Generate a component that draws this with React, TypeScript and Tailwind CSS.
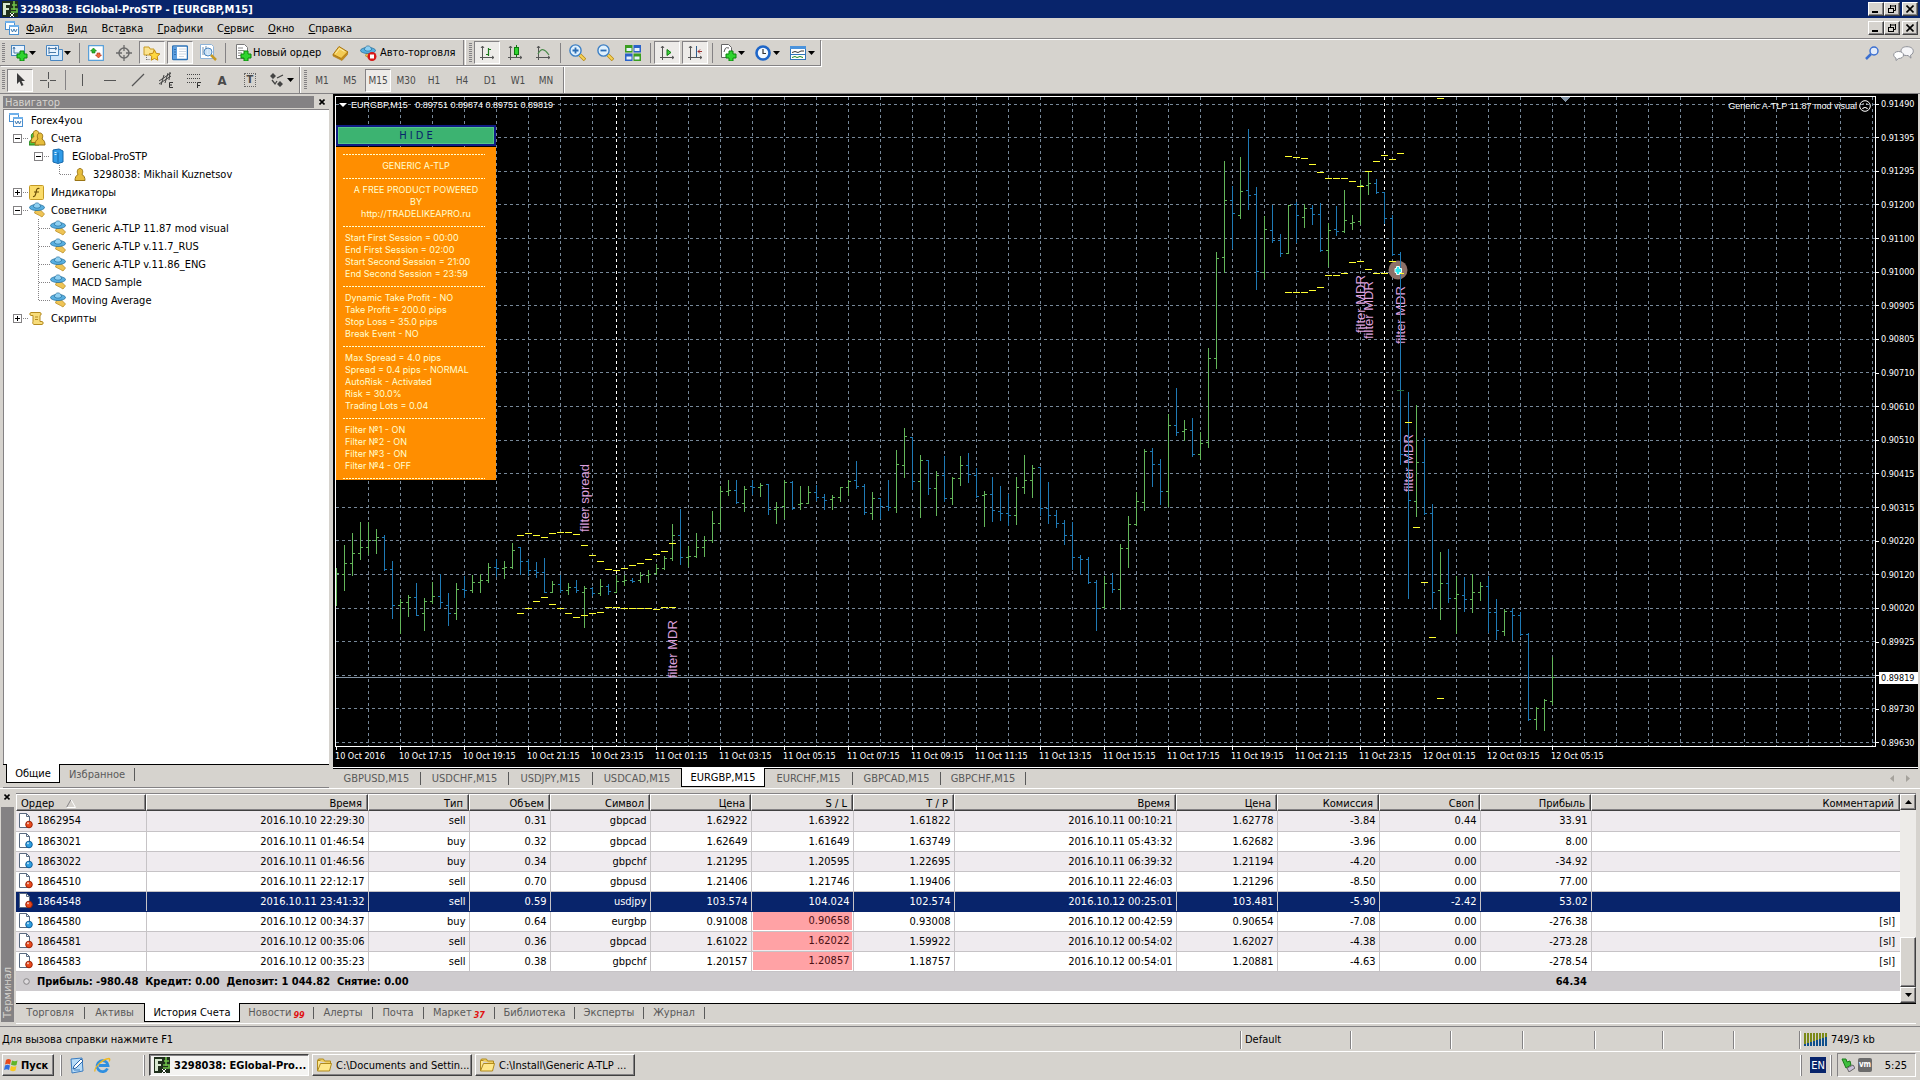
import type { ReactNode } from "react";

/* ---------- chart data: [high, low, open, close] as chart ordinates ---------- */
const BARS: number[][] = [
  [568, 605, 574, 573], [545, 590, 574, 563], [533, 575, 563, 553], [522, 559, 553, 547], [522, 554, 547, 540],
  [529, 553, 540, 537], [535, 570, 537, 569], [561, 618, 569, 605], [599, 633, 605, 602], [595, 616, 602, 597],
  [583, 615, 597, 615], [598, 630, 613, 601], [582, 603, 601, 596], [574, 607, 596, 602], [593, 625, 605, 613],
  [583, 619, 613, 589], [576, 597, 589, 590], [575, 592, 590, 582], [574, 592, 582, 580], [563, 582, 580, 567],
  [559, 576, 567, 568], [561, 578, 568, 567], [543, 568, 567, 550], [547, 574, 547, 561], [559, 575, 561, 570],
  [562, 577, 570, 572], [558, 592, 572, 592], [581, 592, 592, 584], [575, 592, 584, 590], [583, 594, 590, 587],
  [580, 592, 587, 590], [586, 627, 592, 588], [587, 595, 588, 593], [579, 595, 593, 586], [584, 594, 586, 591],
  [575, 592, 592, 581], [575, 585, 581, 580], [578, 582, 580, 581], [572, 582, 580, 575], [570, 582, 575, 574],
  [564, 574, 573, 568], [556, 569, 568, 558], [524, 560, 558, 535], [509, 564, 535, 557], [546, 566, 557, 556],
  [533, 557, 556, 547], [536, 556, 547, 540], [511, 542, 540, 523], [486, 529, 523, 491], [480, 495, 491, 490],
  [480, 503, 490, 502], [486, 511, 503, 489], [480, 494, 486, 487], [483, 496, 487, 485], [484, 514, 484, 509],
  [502, 523, 509, 507], [480, 518, 506, 482], [481, 509, 482, 508], [486, 509, 504, 503], [486, 503, 503, 492],
  [485, 500, 492, 497], [494, 509, 497, 500], [495, 509, 499, 497], [487, 501, 497, 487], [480, 495, 487, 481],
  [461, 488, 480, 486], [484, 514, 486, 512], [492, 519, 513, 498], [498, 518, 498, 506], [480, 510, 506, 507],
  [450, 512, 507, 464], [428, 477, 465, 436], [437, 489, 437, 481], [455, 517, 481, 460], [460, 494, 460, 488],
  [471, 515, 488, 475], [456, 501, 475, 498], [477, 504, 498, 478], [456, 485, 478, 465], [453, 482, 465, 474],
  [468, 497, 475, 496], [491, 526, 495, 494], [477, 521, 494, 510], [486, 520, 511, 513], [494, 525, 513, 515],
  [477, 524, 515, 487], [455, 493, 487, 480], [465, 497, 480, 468], [467, 515, 467, 508], [482, 523, 508, 515],
  [510, 527, 515, 523], [520, 544, 523, 535], [522, 569, 535, 557], [555, 574, 557, 559], [557, 583, 559, 582],
  [580, 630, 582, 608], [576, 608, 607, 583], [573, 592, 583, 589], [544, 609, 589, 548], [516, 567, 548, 524],
  [492, 525, 524, 501], [449, 510, 502, 451], [448, 486, 451, 464], [459, 504, 464, 491], [414, 506, 491, 425],
  [388, 435, 425, 432], [420, 440, 431, 429], [418, 456, 430, 454], [432, 459, 454, 443], [348, 447, 442, 358],
  [252, 368, 358, 258], [161, 272, 257, 200], [186, 248, 200, 213], [157, 218, 215, 191], [129, 209, 190, 195],
  [187, 289, 194, 271], [216, 278, 272, 229], [205, 242, 230, 240], [234, 256, 240, 253], [205, 253, 253, 205],
  [202, 242, 204, 215], [204, 227, 217, 208], [205, 224, 208, 214], [203, 251, 214, 250], [223, 266, 250, 230],
  [206, 235, 229, 231], [190, 232, 231, 220], [215, 229, 223, 222], [180, 224, 221, 185], [171, 194, 185, 183],
  [179, 193, 183, 192], [192, 223, 192, 218], [215, 255, 218, 254], [252, 464, 254, 454], [392, 598, 454, 500],
  [405, 516, 501, 462], [438, 514, 462, 513], [504, 608, 513, 592], [552, 619, 590, 583], [549, 602, 583, 598],
  [576, 633, 598, 594], [577, 611, 595, 599], [574, 612, 599, 592], [582, 600, 592, 586], [576, 632, 586, 612],
  [599, 639, 612, 630], [609, 635, 631, 611], [608, 640, 611, 615], [612, 635, 615, 634], [633, 720, 634, 719],
  [707, 729, 719, 708], [699, 730, 708, 700], [657, 704, 701, 677],
];

/* channel marks: [bar index, ordinate] */
const MARKS: number[][] = [
  [23, 535], [24, 533], [25, 535], [26, 537], [27, 533], [28, 532], [29, 532], [30, 534], [31, 545], [32, 555],
  [33, 561], [34, 569], [35, 570], [36, 568], [37, 565], [38, 563], [39, 559], [40, 554], [41, 551], [42, 543],
  [23, 613], [24, 608], [25, 601], [26, 597], [27, 604], [28, 608], [29, 613], [30, 617], [31, 615], [32, 613],
  [33, 612], [34, 607], [35, 607], [36, 608], [37, 608], [38, 608], [39, 608], [40, 609], [41, 607], [42, 607],
  [119, 156], [120, 157], [121, 158], [122, 164], [123, 172], [124, 178], [125, 178], [126, 178], [127, 181],
  [128, 186], [129, 171], [130, 161], [131, 155], [132, 159], [133, 153], [138, 98],
  [119, 292], [120, 292], [121, 292], [122, 290], [123, 287], [124, 275], [125, 275], [126, 273], [127, 262],
  [128, 261], [129, 269], [130, 273], [131, 273], [132, 261], [133, 273], [134, 422],
  [135, 527], [136, 582], [137, 637], [138, 698],
];

const bx = (i: number) => 336 + i * 8;
const barPath = (up: boolean) =>
  BARS.map(([h, l, o, c], i) =>
    c < o === up
      ? `M${bx(i) + 0.5} ${h}V${l + 1}M${bx(i) - 2} ${o + 0.5}h3M${bx(i)} ${c + 0.5}h3`
      : ""
  ).join("");

const GRID_Y = [104, 137, 171, 204, 238, 272, 305, 339, 372, 406, 440, 473, 507, 540, 574, 608, 641, 675, 708, 742];
const PRICES = [
  "0.91490", "0.91395", "0.91295", "0.91200", "0.91100", "0.91000", "0.90905", "0.90805", "0.90710", "0.90610",
  "0.90510", "0.90415", "0.90315", "0.90220", "0.90120", "0.90020", "0.89925", "", "0.89730", "0.89630",
];
const TIMES = [
  "10 Oct 2016", "10 Oct 17:15", "10 Oct 19:15", "10 Oct 21:15", "10 Oct 23:15", "11 Oct 01:15", "11 Oct 03:15",
  "11 Oct 05:15", "11 Oct 07:15", "11 Oct 09:15", "11 Oct 11:15", "11 Oct 13:15", "11 Oct 15:15", "11 Oct 17:15",
  "11 Oct 19:15", "11 Oct 21:15", "11 Oct 23:15", "12 Oct 01:15", "12 Oct 03:15", "12 Oct 05:15",
];

const LABELS: [string, number, number][] = [
  ["filter spread", 589, 532],
  ["filter MDR", 677, 678],
  ["filter MDR", 1365, 333],
  ["filter MDR", 1373, 339],
  ["filter MDR", 1405, 344],
  ["filter MDR", 1413, 492],
];

/* ---------- small building blocks ---------- */
const RAISED = "border border-t-white border-l-white border-r-[#404040] border-b-[#404040] shadow-[inset_-1px_-1px_0_#848284] bg-[#d6d3ce]";
const PRESSED = "border border-t-[#848284] border-l-[#848284] border-r-white border-b-white bg-[#edebe8]";

function Svg({ children, w = 16, h = 16 }: { children: ReactNode; w?: number; h?: number }) {
  return (
    <svg width={w} height={h} viewBox={`0 0 ${w} ${h}`} fill="none" className="shrink-0" aria-hidden="true">
      {children}
    </svg>
  );
}

const Caret = () => <Svg w={7} h={4}><path d="M0 0h7L3.500 4z" fill="#000" /></Svg>;
const Plus = () => <path d="M9 7h4v3h3v4h-3v3H9v-3H6v-4h3z" fill="#2fd42f" stroke="#0a860a" />;

const NewChartIcon = () => (
  <Svg w={17} h={17}>
    <rect x="0.500" y="1.500" width="13" height="10" fill="#eaf4ff" stroke="#4a86c0" />
    <path d="M3 3v6h8M2 5l1-2 1 2M9 8l2 1-2 1" stroke="#4a7aa8" />
    <Plus />
  </Svg>
);
const ProfilesIcon = () => (
  <Svg w={17} h={16}>
    <path d="M4.500 4.500h12v11h-12z" fill="#cfe4f8" stroke="#4a86c0" />
    <path d="M0.500 0.500h12v10h-12z" fill="#eaf4ff" stroke="#4a86c0" />
    <path d="M2 3.500h9M9 2l2 1.500L9 5M3 2v7M3 7.500h7" stroke="#4a7aa8" />
  </Svg>
);
const MarketWatchIcon = () => (
  <Svg>
    <rect x="0.500" y="0.500" width="15" height="15" rx="1" fill="#fff" stroke="#5aa0d8" strokeWidth="1.500" />
    <path d="M5.500 3l3 3-1.500 0v2H4V6H2.500z" fill="#2db52d" stroke="#0d7a0d" strokeWidth="0.600" />
    <path d="M10.500 13l3-3H12V8H9v2H7.500z" fill="#f06a3c" stroke="#b02a10" strokeWidth="0.600" />
  </Svg>
);
const TargetIcon = () => (
  <Svg>
    <circle cx="8" cy="8" r="5" stroke="#6b6b6b" strokeWidth="1.500" />
    <path d="M8 0v6M8 10v6M0 8h6M10 8h6" stroke="#6b6b6b" strokeWidth="1.300" />
  </Svg>
);
const STAR = "M11 5l1.700 3.400 3.700.5-2.700 2.600.6 3.700L11 13.500l-3.300 1.700.6-3.700L5.600 8.900l3.700-.5z";
const NavigatorIcon = () => (
  <Svg w={18} h={16}>
    <path d="M1 2h5l1 2h4v6H1z" fill="#fbe38e" stroke="#c79a25" />
    <path d="M3.500 10v5M3.500 14.500h4" stroke="#777" strokeDasharray="1 1" />
    <path d={STAR} fill="#ffd840" stroke="#c28a10" transform="translate(0.500 0)" />
  </Svg>
);
const DataIcon = () => (
  <Svg>
    <rect x="0.500" y="1" width="15" height="13.500" rx="1" fill="#fff" stroke="#2f74b8" strokeWidth="1.500" />
    <path d="M1 2h4v12H1z" fill="#5d9fe0" />
    <path d="M7 4h7M7 6.500h7M7 9h7M7 11.500h5" stroke="#cfd8e2" />
    <path d="M3 4v1M3 6.500v1M3 9v1" stroke="#0b3c78" />
  </Svg>
);
const TesterIcon = () => (
  <Svg w={17} h={17}>
    <path d="M0.500 0.500h11l2 2v12h-13z" fill="#fff" stroke="#8fb4d8" />
    <path d="M3 3v8M6 2v9M9 4v6" stroke="#6f8fae" />
    <circle cx="8" cy="8" r="4" fill="#cfe6fa" fillOpacity="0.800" stroke="#4a86c0" />
    <path d="M11 11l5 5" stroke="#c79a25" strokeWidth="2.500" />
  </Svg>
);
const OrderIcon = () => (
  <Svg w={17} h={17}>
    <path d="M1.500 0.500h8l3 3v11h-11z" fill="#fff" stroke="#7a7a7a" />
    <path d="M3 4h5M3 6.500h6M3 9h4M3 11.500h3" stroke="#8a8a8a" />
    <Plus />
  </Svg>
);
const BookIcon = () => (
  <Svg w={17} h={16}>
    <path d="M1 9.500L7 1.500l9 5.500-6 7z" fill="#f3cb55" stroke="#a87410" />
    <path d="M1 9.500l8 4L15.500 7v2.500L10 15.500 1 11z" fill="#c68d1b" stroke="#a87410" strokeWidth="0.600" />
    <path d="M3.500 8.500L7.500 3.500l5 3" stroke="#fff0b0" />
  </Svg>
);
function ExpertIcon({ stop = false }: { stop?: boolean }) {
  return (
    <Svg w={17} h={16}>
      <path d="M6.500 8l5 0 4 4-2.500 3-2.500-1.500L5.500 11z" fill="#efc456" stroke="#b58618" strokeWidth="0.700" />
      <ellipse cx="8" cy="5.500" rx="7.500" ry="3" fill="#57aee0" stroke="#25719f" strokeWidth="0.800" />
      <path d="M4.500 5c0-5.500 7-5.500 7 0-2 1.500-5 1.500-7 0z" fill="#8fd0f2" stroke="#25719f" strokeWidth="0.700" />
      {stop && <><circle cx="12" cy="11.500" r="4.500" fill="#d81818" /><rect x="10" y="9.500" width="4" height="4" fill="#fff" /></>}
    </Svg>
  );
}
const Axes = ({ children, c = "#555" }: { children: ReactNode; c?: string }) => (
  <Svg><path d="M3.500 1v14M1 12.500h14M2 3l1.500-2L5 3M13 11l2 1.500L13 14" stroke={c} />{children}</Svg>
);
const BarsIcon = () => <Axes><path d="M9.500 3v8M7 9.500h2.500M9.500 4.500H12" stroke="#1c7a1c" strokeWidth="1.200" /></Axes>;
const CandleIcon = () => <Axes><path d="M9.500 0v12" stroke="#0d7a0d" /><rect x="7.500" y="2.500" width="4" height="7" fill="#2ed32e" stroke="#0d7a0d" /></Axes>;
const LineIcon = () => <Axes><path d="M3 9c3-6 6-6 11 1" stroke="#4a8a4a" strokeWidth="1.200" /></Axes>;
function ZoomIcon({ plus = false }: { plus?: boolean }) {
  return (
    <Svg w={17} h={17}>
      <path d="M10.500 10.500l5.500 5.500" stroke="#b98a14" strokeWidth="3.500" />
      <path d="M10.500 10.500l5 5" stroke="#f6d257" strokeWidth="2" />
      <circle cx="6.500" cy="6.500" r="5.600" fill="#dff0fd" stroke="#3c7fc4" strokeWidth="1.400" />
      <path d={plus ? "M3.500 6.500h6M6.500 3.500v6" : "M3.500 6.500h6"} stroke="#2a6cb4" strokeWidth="1.800" />
    </Svg>
  );
}
const TilesIcon = () => (
  <Svg>
    <path d="M0 0h7.500v7.500H0zM8.500 8.500H16V16H8.500z" fill="#3a9d20" /><path d="M8.500 0H16v7.500H8.500zM0 8.500h7.500V16H0z" fill="#2a62c8" />
    <path d="M1.500 3h5v3h-5zM9.500 3h5v3h-5zM1.500 11.500h5v3h-5zM9.500 11.500h5v3h-5z" fill="#e8f2fb" />
  </Svg>
);
const ScrollIcon = () => <Axes><path d="M8 4.500v6l4-3z" fill="#3fd43f" stroke="#117a11" /></Axes>;
const ShiftIcon = () => <Axes><path d="M9.500 1v11" stroke="#2f5f8f" /><path d="M15 6.500h-4M13 4.500l-2 2 2 2" stroke="#a03030" /></Axes>;
const IndicatorsIcon = () => (
  <Svg w={17} h={17}><path d="M1.500 0.500h7l3 3v10h-10z" fill="#fff" stroke="#666" /><path d="M4 8c2-6 2-4 5-4" stroke="#555" /><Plus /></Svg>
);
const ClockIcon = () => (
  <Svg><circle cx="8" cy="8" r="6.500" fill="#f4f9ff" stroke="#1f66c8" strokeWidth="2.600" /><path d="M8 4v4.500h3" stroke="#333" strokeWidth="1.200" /></Svg>
);
const TemplateIcon = () => (
  <Svg>
    <rect x="0.500" y="1.500" width="15" height="13" fill="#fff" stroke="#2f74b8" /><path d="M0 1h16v3H0z" fill="#4b93dc" />
    <path d="M2 7.500l3-1 3 1 3-1.500h3" stroke="#333" /><path d="M1 9.500h14" stroke="#2f74b8" /><path d="M2 12.500l3-1 2 1 3-1 3 1" stroke="#1d8a1d" />
  </Svg>
);
const ChartsIcon = () => (
  <Svg w={14} h={14}>
    <rect x="0.500" y="0.500" width="9" height="8" fill="#fff" stroke="#4a8fd0" /><path d="M0 0h10v2H0z" fill="#6fb0ea" />
    <rect x="4.500" y="4.500" width="9" height="9" fill="#fff" stroke="#4a8fd0" /><path d="M4 4h10v2H4z" fill="#6fb0ea" />
    <path d="M6 8l1.500 3L9 8l1.500 3L12 8" stroke="#3b78b0" />
  </Svg>
);
const AppIcon = () => (
  <Svg>
    <rect width="16" height="16" fill="#20301c" /><path d="M1 2h7v2H4v3h3v2H4v5H1z" fill="#d8e8d0" />
    <path d="M12 0v9M10 4h5M9 8h6v3H9" stroke="#6fc04a" strokeWidth="1.600" /><path d="M8 12l4 4M12 12l-4 4" stroke="#fff" />
  </Svg>
);
const PERSON = "M2 13.500c0-3 1-5 3-6C3.500 4.500 4.500 1.500 7 1.500s3.500 3 2 6c2 1 3 3 3 6z";
const PersonIcon = () => <Svg w={14} h={15}><path d={PERSON} fill="#e6bd3c" stroke="#9a7414" /></Svg>;
const AccountsIcon = () => (
  <Svg w={17} h={16}>
    <path d={PERSON} fill="#4fc23c" stroke="#21801a" transform="translate(-2 1.500)" />
    <path d={PERSON} fill="#f0ca50" stroke="#9a7414" transform="translate(0 -1)" />
    <path d={PERSON} fill="#e6bd3c" stroke="#9a7414" transform="translate(4 1.500)" />
  </Svg>
);
const ServerIcon = () => (
  <Svg w={12} h={16}><path d="M1 2l6-1 4 2v11l-5 1.500L1 14z" fill="#2f9be8" stroke="#1466a8" /><path d="M6 4.500v10" stroke="#1466a8" /><path d="M2.500 4.500h2M2.500 6.500h2" stroke="#d8f0ff" /></Svg>
);
const FunctionIcon = () => (
  <Svg w={15} h={15}><rect x="0.500" y="0.500" width="14" height="14" rx="1" fill="#fbdc6a" stroke="#c49a25" /><path d="M10.500 3.500c-3-1-3 2-3.500 4s-.5 4.500-3 4M5 7h5" stroke="#6b4e08" strokeWidth="1.200" /></Svg>
);
const ScriptIcon = () => (
  <Svg w={15} h={15}><path d="M2 1.500h9c1.500 0 1.500 3 0 3v6h2c1.500 0 1.500 3 0 3H5c-1.500 0-1.500-3-1-3v-6H2c-1.500 0-1.500-3 0-3z" fill="#f7dc7a" stroke="#b58b20" /><path d="M6 6h3M6 8.500h3" stroke="#b58b20" /></Svg>
);
function DealIcon({ sell }: { sell: boolean }) {
  return (
    <Svg w={14} h={16}>
      <path d="M0.500 0.500h7l3 3v11h-10z" fill="#fff" stroke="#5a6a80" /><path d="M7.500 0.500v3h3" stroke="#5a6a80" />
      <circle cx="10" cy="11.500" r="3.300" fill={sell ? "#e8491d" : "#2f9ee0"} stroke={sell ? "#9c2408" : "#10609c"} />
      <circle cx="9" cy="10.300" r="1" fill="#fff" fillOpacity="0.700" />
    </Svg>
  );
}
const FolderIcon = () => (
  <Svg w={15} h={14}><path d="M0.500 2.500l1-1.500h5l1 2h6v3" fill="#f0cf60" stroke="#b08a1c" /><path d="M0.500 12.500v-10h3M3.500 5.500h11l-2 7.500h-12z" fill="#ffe88a" stroke="#b08a1c" /></Svg>
);

function Grip() {
  return <div className="mx-[2px] h-5 w-[3px] shrink-0 bg-[repeating-linear-gradient(to_bottom,#848284_0_1px,#d6d3ce_1px_2px)]" />;
}
function Sep() {
  return <div className="flex h-5 w-1 shrink-0 justify-center"><div className="w-px bg-[#848284]" /></div>;
}
function Tool({ label, children, on = false, menu = false }: { label: string; children: ReactNode; on?: boolean; menu?: boolean }) {
  const base = "flex h-[23px] shrink-0 items-center ";
  return (
    <button type="button" aria-label={label} className={base + (menu ? "w-[33px] justify-between pl-1 pr-1" : "w-[26px] justify-center") + (on ? " " + PRESSED : "")}>
      {children}
      {menu && <Caret />}
    </button>
  );
}

function WindowButtons() {
  const b = "flex h-[14px] w-4 items-center justify-center " + RAISED;
  return (
    <div className="flex pr-[2px]">
      <button type="button" aria-label="Свернуть" className={b}><Svg w={8} h={8}><path d="M0 6h6v2H0z" fill="#000" /></Svg></button>
      <button type="button" aria-label="Восстановить" className={b}><Svg w={8} h={8}><path d="M2.500 0v4M7.500 0v5.500H5M2 1h6M0.500 3v5M5.500 3v5M0 3.500h6M0 7.500h6" stroke="#000" /></Svg></button>
      <button type="button" aria-label="Закрыть" className={b + " ml-[2px]"}><Svg w={8} h={8}><path d="M0.500 0.500l7 7M7.500 0.500l-7 7" stroke="#000" strokeWidth="1.600" /></Svg></button>
    </div>
  );
}

/* ---------- header ---------- */
const MENU: [string, string, string][] = [
  ["", "Ф", "айл"], ["", "В", "ид"], ["Вст", "а", "вка"], ["", "Г", "рафики"], ["С", "е", "рвис"], ["", "О", "кно"], ["", "С", "правка"],
];
const PERIODS = ["M1", "M5", "M15", "M30", "H1", "H4", "D1", "W1", "MN"];

function Header() {
  return (
    <header className="shrink-0">
      <div className="flex h-[18px] items-center bg-[#08246b] pl-[2px] text-white">
        <AppIcon />
        <h1 className="ml-[2px] flex-1 font-bold">3298038: EGlobal-ProSTP - [EURGBP,M15]</h1>
        <WindowButtons />
      </div>
      <div className="flex h-[21px] items-center border-b border-[#848284] pl-[5px]">
        <ChartsIcon />
        <nav className="ml-[7px] flex flex-1 gap-[14px]">
          {MENU.map(([a, u, z]) => (
            <button type="button" key={u + z}>{a}<span className="underline">{u}</span>{z}</button>
          ))}
        </nav>
        <WindowButtons />
      </div>
      <div className="flex items-start justify-between border-t border-white">
        <div className="flex h-[26px] items-center border-r border-b border-[#848284] pr-[1px] shadow-[1px_1px_0_#fff]">
          <div className="flex h-full items-center gap-[2px] border-r border-[#848284] pr-[3px]">
            <div className="-mr-[2px] flex"><Grip /></div>
            <Tool label="Новый график" menu><NewChartIcon /></Tool>
            <Tool label="Профили" menu><ProfilesIcon /></Tool>
            <Sep />
            <Tool label="Обзор рынка"><MarketWatchIcon /></Tool>
            <Tool label="Окно данных"><TargetIcon /></Tool>
            <Tool label="Навигатор" on><NavigatorIcon /></Tool>
            <Tool label="Терминал" on><DataIcon /></Tool>
            <Tool label="Тестер стратегий"><TesterIcon /></Tool>
            <Sep />
            <button type="button" className="flex w-24 shrink-0 items-center gap-[1px] pl-[6px]"><OrderIcon />Новый ордер</button>
            <Tool label="MetaEditor"><BookIcon /></Tool>
            <button type="button" className="flex shrink-0 items-center gap-[3px] px-[5px]"><ExpertIcon stop />Авто-торговля</button>
          </div>
          <div className="ml-[1px] flex h-full items-center gap-[2px] border-l border-white">
            <div className="-mr-[2px] flex pl-[1px]"><Grip /></div>
            <Tool label="Бары" on><BarsIcon /></Tool>
            <Tool label="Свечи"><CandleIcon /></Tool>
            <Tool label="Линия"><LineIcon /></Tool>
            <Sep />
            <Tool label="Увеличить"><ZoomIcon plus /></Tool>
            <Tool label="Уменьшить"><ZoomIcon /></Tool>
            <Tool label="Упорядочить окна"><TilesIcon /></Tool>
            <Sep />
            <Tool label="Автопрокрутка" on><ScrollIcon /></Tool>
            <Tool label="Сдвиг графика" on><ShiftIcon /></Tool>
            <Sep />
            <Tool label="Индикаторы" menu><IndicatorsIcon /></Tool>
            <Tool label="Периоды" menu><ClockIcon /></Tool>
            <Tool label="Шаблоны" menu><TemplateIcon /></Tool>
          </div>
        </div>
        <div className="flex h-[26px] items-center gap-[14px] pr-[6px]">
          <button type="button" aria-label="Поиск"><Svg w={14} h={14}><path d="M6 8l-5 5" stroke="#3b6fd0" strokeWidth="2.500" /><circle cx="9" cy="5" r="4" fill="#e4ecfa" stroke="#3b6fd0" strokeWidth="1.400" /></Svg></button>
          <button type="button" aria-label="Сообщения"><Svg w={21} h={15}><path d="M14 0.700c4 0 6.300 2 6.300 4.500S18 9 17.500 9.200l.5 3-3-2.700c-4.500.3-7-1.500-7-4.300s2-4.500 6-4.500z" fill="#f6f6f8" stroke="#8e9098" /><path d="M5.500 5.500c3 0 5 1.500 5 3.500s-2 3.500-5 3.500L3 14.500v-2.500C1.500 11.500.7 10.300.7 9c0-2 2-3.500 4.800-3.500z" fill="#fff" stroke="#8e9098" /></Svg></button>
        </div>
      </div>
      <div className="mt-px flex h-[26px] items-center">
        <div className="flex h-full items-center gap-[2px] border-r border-[#848284] pr-[1px] text-[#4a4a4a] shadow-[1px_0_0_#fff]">
          <div className="-mr-[2px] flex"><Grip /></div>
          <Tool label="Курсор" on><Svg w={14} h={16}><path d="M4 1v11l2.500-2.500L8.500 14l2-1-2-4H12z" fill="#3a3a3a" /></Svg></Tool>
          <Tool label="Перекрестие"><Svg><path d="M8.500 0v7M8.500 10v6M0 8.500h7M10 8.500h6" stroke="#555" /></Svg></Tool>
          <Sep />
          <Tool label="Вертикальная линия"><Svg><path d="M8.500 2v12" stroke="#555" /></Svg></Tool>
          <Tool label="Горизонтальная линия"><Svg><path d="M2 8.500h12" stroke="#555" /></Svg></Tool>
          <Tool label="Трендовая линия"><Svg><path d="M2 14L14 2" stroke="#555" strokeWidth="1.200" /></Svg></Tool>
          <Tool label="Канал"><Svg><path d="M1 9L13 1M1 12l12-8M3 13L6 3M7 11l3-10M11 8l1-8" stroke="#444" /><path d="M15 10.500h-3.500v5H15M11 13h3" stroke="#333" /></Svg></Tool>
          <Tool label="Фибоначчи"><Svg><path d="M1 2.500h14M1 6.500h14M1 10.500h9" stroke="#444" strokeDasharray="1 1" /><path d="M15 10.500h-3.500V16M11 13.500h3" stroke="#333" /></Svg></Tool>
          <Tool label="Текст"><span className="text-[13px] font-bold">A</span></Tool>
          <Tool label="Текстовая метка"><span className="border border-dotted border-[#666] px-[2px] text-[11px] leading-[12px] font-bold">T</span></Tool>
          <Tool label="Стрелки" menu><Svg><path d="M4 1l3 3-3 3-3-3zM11 9l3 3-3 3-3-3z" fill="#444" /><path d="M3 8l3 4 2-3M8 6l6-3" stroke="#444" strokeWidth="1.300" /></Svg></Tool>
        </div>
        <div className="ml-[2px] flex h-full items-center gap-[2px] border-r border-[#848284] pr-1 text-[#4a4a4a] shadow-[1px_0_0_#fff]">
          <div className="-mr-[2px] flex"><Grip /></div>
          {PERIODS.map((p) => (
            <button type="button" key={p} className={"h-[23px] w-[26px] shrink-0 text-[10px] " + (p === "M15" ? PRESSED : "")}>{p}</button>
          ))}
        </div>
      </div>
    </header>
  );
}

/* ---------- navigator ---------- */
function Expander({ open }: { open: boolean }) {
  return (
    <Svg w={16} h={18}>
      <rect x="0.500" y="5.500" width="8" height="8" fill="#fff" stroke="#848284" />
      <path d={open ? "M2 9.500h5" : "M2 9.500h5M4.500 7v5"} stroke="#000" />
      <path d="M10 9.500h6" stroke="#848284" strokeDasharray="1 1" />
    </Svg>
  );
}
function Branch({ last = false }: { last?: boolean }) {
  return <Svg w={12} h={18}><path d={last ? "M0.500 0v9.500M1 9.500h11" : "M0.500 0v18M1 9.500h11"} stroke="#848284" strokeDasharray="1 1" /></Svg>;
}
function TreeRow({ pad, lead, icon, text }: { pad: string; lead?: ReactNode; icon: ReactNode; text: string }) {
  return (
    <li className={"flex h-[18px] items-center " + pad}>
      {lead}
      <span className="flex w-[22px] items-center">{icon}</span>
      <span>{text}</span>
    </li>
  );
}
function Navigator() {
  const experts = ["Generic A-TLP 11.87 mod visual", "Generic A-TLP v.11.7_RUS", "Generic A-TLP v.11.86_ENG", "MACD Sample", "Moving Average"];
  return (
    <aside className="flex w-[333px] shrink-0 flex-col border-t border-[#848284] pt-[2px] pr-1 pl-[3px]">
      <div className="flex h-[12px] items-center">
        <h2 className="flex h-full flex-1 items-center bg-[#848284] pl-[2px] text-[#d6d3ce]">Навигатор</h2>
        <button type="button" aria-label="Закрыть навигатор" className="flex w-[15px] justify-center"><Svg w={6} h={6}><path d="M0.500 0.500l5 5M5.500 0.500l-5 5" stroke="#000" strokeWidth="1.600" /></Svg></button>
      </div>
      <ul className="mt-[1px] flex-1 border-t border-l border-[#848284] bg-white pt-[1px]">
        <TreeRow pad="pl-[5px]" icon={<ChartsIcon />} text="Forex4you" />
        <TreeRow pad="pl-[9px]" lead={<Expander open />} icon={<AccountsIcon />} text="Счета" />
        <TreeRow pad="pl-[30px]" lead={<Expander open />} icon={<span className="pl-[2px]"><ServerIcon /></span>} text="EGlobal-ProSTP" />
        <TreeRow pad="pl-[55px]" lead={<Branch last />} icon={<span className="pl-[2px]"><PersonIcon /></span>} text="3298038: Mikhail Kuznetsov" />
        <TreeRow pad="pl-[9px]" lead={<Expander open={false} />} icon={<FunctionIcon />} text="Индикаторы" />
        <TreeRow pad="pl-[9px]" lead={<Expander open />} icon={<ExpertIcon />} text="Советники" />
        {experts.map((e, i) => (
          <TreeRow key={e} pad="pl-[34px]" lead={<Branch last={i === 4} />} icon={<ExpertIcon />} text={e} />
        ))}
        <TreeRow pad="pl-[9px]" lead={<Expander open={false} />} icon={<ScriptIcon />} text="Скрипты" />
      </ul>
      <div className="flex h-6 border-t border-b border-black border-b-[#848284] pl-[3px] text-[#5a5a5a]">
        <button type="button" className="-mt-px h-[19px] w-[54px] border border-t-0 border-black bg-white text-black">Общие</button>
        <button type="button" className="my-[3px] h-[13px] w-[75px] border-r border-[#5a5a5a] leading-[12px]">Избранное</button>
      </div>
    </aside>
  );
}

/* ---------- chart ---------- */
const INFO: string[][] = [
  ["Start First Session = 00:00", "End First Session = 02:00", "Start Second Session = 21:00", "End Second Session = 23:59"],
  ["Dynamic Take Profit - NO", "Take Profit = 200.0 pips", "Stop Loss = 35.0 pips", "Break Event - NO"],
  ["Max Spread = 4.0 pips", "Spread = 0.4 pips - NORMAL", "AutoRisk - Activated", "Risk = 30.0%", "Trading Lots = 0.04"],
  ["Filter №1 - ON", "Filter №2 - ON", "Filter №3 - ON", "Filter №4 - OFF"],
];
const Rule = () => (
  <div className="flex h-3 items-center pr-1">
    <div className="h-px flex-1 bg-[repeating-linear-gradient(to_right,#ffffd0_0_2px,transparent_2px_3px)]" />
  </div>
);

function Plot() {
  return (
    <div className="relative flex-1 overflow-hidden border border-white">
      <svg viewBox="336 97 1539 649" preserveAspectRatio="none" className="absolute inset-0 h-full w-full" shapeRendering="crispEdges" fill="none">
        <g stroke="#778899" strokeDasharray="3 3">
          {GRID_Y.map((y) => <path key={y} d={`M336 ${y + 0.5}H1875`} />)}
          {Array.from({ length: 48 }, (_, k) => <path key={k} d={`M${368.5 + k * 32} 97V746`} />)}
        </g>
        <path d="M336 677.500H1875" stroke="#8494a5" />
        <path d="M616.500 97V746M1384.500 97V746" stroke="#fff" strokeDasharray="3 3" />
        <path d={barPath(true)} stroke="#63b65a" />
        <g shapeRendering="auto">
          {LABELS.map(([t, x, y]) => (
            <text key={x} transform={`translate(${x} ${y}) rotate(-90)`} fill="#dda0dd" fontSize="13" fontFamily="Liberation Sans, sans-serif">{t}</text>
          ))}
        </g>
        <circle cx="1398" cy="270" r="9.500" fill="#8c7068" shapeRendering="auto" />
        <path d={barPath(false)} stroke="#1f7ab5" />
        <path d="M1397 390.500h7" stroke="#2f6f3a" />
        <path d={MARKS.map(([i, y]) => `M${bx(i) - 3} ${y + 0.5}h7`).join("")} stroke="#ffff31" />
        <path d="M1396.500 266.500h3v2h2v4h-2v2h-3v-2h-1.500v-4h1.500z" fill="#29e7f0" stroke="#e8ffff" shapeRendering="auto" />
        <path d="M1560 97h10l-5 5z" fill="#8494a5" />
      </svg>
      <div className="absolute top-[2px] left-[3px] flex items-center text-[9px] leading-3 text-white">
        <Svg w={8} h={4}><path d="M0 0h8L4 4z" fill="#fff" /></Svg>
        <span className="ml-1 font-['Liberation_Sans',sans-serif]">EURGBP,M15&nbsp;&nbsp; 0.89751 0.89874 0.89751 0.89819</span>
      </div>
      <div className="absolute top-[3px] right-1 flex items-center gap-[2px] text-[9px] leading-3 text-white">
        <span className="font-['Liberation_Sans',sans-serif]">Generic A-TLP 11.87 mod visual</span>
        <Svg w={12} h={12}><circle cx="6" cy="6" r="5.300" stroke="#fff" /><path d="M3.500 4h1.500M7 4h1.500M3.500 9c1-2 4-2 5 0" stroke="#fff" strokeWidth="1.200" /></Svg>
      </div>
      <button type="button" className="absolute top-7 left-0 h-[21px] w-40 border-2 border-[#101c84] bg-[#3cb371] text-[11px] leading-4 text-[#08246b] shadow-[inset_0_0_0_1px_#55c68a]">H I D E</button>
      <div className="absolute top-[50px] left-0 w-40 bg-[#ff8e00] px-[7px] pt-px text-[9px] leading-3 text-[#ffffd0] font-['Inter',sans-serif]">
        <Rule />
        <p className="text-center">GENERIC A-TLP</p>
        <Rule />
        <p className="text-center whitespace-nowrap">A FREE PRODUCT POWERED<br />BY<br />http://TRADELIKEAPRO.ru</p>
        {INFO.map((g, i) => (
          <div key={i}>
            <Rule />
            {g.map((l) => <p key={l} className="pl-[2px] whitespace-pre">{l}</p>)}
          </div>
        ))}
        <div className="-mb-[4px]"><Rule /></div>
      </div>
    </div>
  );
}

const CHART_TABS: [string, string][] = [
  ["GBPUSD,M15", "w-[88px]"], ["USDCHF,M15", "w-[88px]"], ["USDJPY,M15", "w-[84px]"], ["USDCAD,M15", "w-[88px]"],
  ["EURGBP,M15", "w-[84px]"], ["EURCHF,M15", "w-[88px]"], ["GBPCAD,M15", "w-[88px]"], ["GBPCHF,M15", "w-[85px]"],
];

function ChartArea() {
  return (
    <section className="flex min-w-0 flex-1 flex-col border-t border-[#848284] pr-[2px]">
      <div className="flex flex-1 bg-black text-[9px] text-white">
        <div className="flex min-w-0 flex-1 flex-col pt-[2px] pl-[2px]">
          <Plot />
          <div className="flex h-5 overflow-hidden">
            {TIMES.map((t) => (
              <div key={t} className="w-16 shrink-0">
                <div className="ml-px h-[3px] w-px bg-white" />
                <div className="leading-3 whitespace-nowrap">{t}</div>
              </div>
            ))}
          </div>
        </div>
        <div className="relative flex w-[42px] shrink-0 flex-col justify-between pt-1 pb-[18px]">
          {PRICES.map((p, i) => (
            <div key={i} className="flex h-3 items-center gap-[2px] leading-3">
              <div className="h-px w-[3px] bg-white" />
              {p}
            </div>
          ))}
          <div className="absolute right-0 bottom-[83px] left-[3px] bg-white pl-[2px] leading-3 text-black">0.89819</div>
        </div>
      </div>
      <div className="flex h-[21px] items-start border-t border-white">
        <div className="flex h-5 flex-1 border-t border-black text-[#5a5a5a]">
          {CHART_TABS.map(([t, w]) =>
            t === "EURGBP,M15" ? (
              <button type="button" key={t} className={"-mt-px h-[19px] border border-t-0 border-black bg-white text-black " + w}>{t}</button>
            ) : (
              <button type="button" key={t} className={"mt-[3px] h-[13px] " + (t === "USDCAD,M15" ? "" : "border-r border-[#5a5a5a] ") + w}>{t}</button>
            )
          )}
          <div className="flex flex-1 items-center justify-end gap-3 pr-2">
            <button type="button" aria-label="Назад"><Svg w={4} h={7}><path d="M4 0v7L0 3.500z" fill="#a5a29c" /></Svg></button>
            <button type="button" aria-label="Вперёд"><Svg w={4} h={7}><path d="M0 0v7l4-3.500z" fill="#a5a29c" /></Svg></button>
          </div>
        </div>
      </div>
    </section>
  );
}

/* ---------- terminal ---------- */
const COLS: [string, string][] = [
  ["Ордер", "w-[130px]"], ["Время", "w-[222px]"], ["Тип", "w-[101px]"], ["Объем", "w-[81px]"], ["Символ", "w-[100px]"],
  ["Цена", "w-[101px]"], ["S / L", "w-[102px]"], ["T / P", "w-[101px]"], ["Время", "w-[222px]"], ["Цена", "w-[101px]"],
  ["Комиссия", "w-[102px]"], ["Своп", "w-[101px]"], ["Прибыль", "w-[111px]"], ["Комментарий", ""],
];
const ROWS: string[][] = [
  ["1862954", "2016.10.10 22:29:30", "sell", "0.31", "gbpcad", "1.62922", "1.63922", "1.61822", "2016.10.11 00:10:21", "1.62778", "-3.84", "0.44", "33.91", ""],
  ["1863021", "2016.10.11 01:46:54", "buy", "0.32", "gbpcad", "1.62649", "1.61649", "1.63749", "2016.10.11 05:43:32", "1.62682", "-3.96", "0.00", "8.00", ""],
  ["1863022", "2016.10.11 01:46:56", "buy", "0.34", "gbpchf", "1.21295", "1.20595", "1.22695", "2016.10.11 06:39:32", "1.21194", "-4.20", "0.00", "-34.92", ""],
  ["1864510", "2016.10.11 22:12:17", "sell", "0.70", "gbpusd", "1.21406", "1.21746", "1.19406", "2016.10.11 22:46:03", "1.21296", "-8.50", "0.00", "77.00", ""],
  ["1864548", "2016.10.11 23:41:32", "sell", "0.59", "usdjpy", "103.574", "104.024", "102.574", "2016.10.12 00:25:01", "103.481", "-5.90", "-2.42", "53.02", ""],
  ["1864580", "2016.10.12 00:34:37", "buy", "0.64", "eurgbp", "0.91008", "0.90658", "0.93008", "2016.10.12 00:42:59", "0.90654", "-7.08", "0.00", "-276.38", "[sl]"],
  ["1864581", "2016.10.12 00:35:06", "sell", "0.36", "gbpcad", "1.61022", "1.62022", "1.59922", "2016.10.12 00:54:02", "1.62027", "-4.38", "0.00", "-273.28", "[sl]"],
  ["1864583", "2016.10.12 00:35:23", "sell", "0.38", "gbpchf", "1.20157", "1.20857", "1.18757", "2016.10.12 00:54:01", "1.20881", "-4.63", "0.00", "-278.54", "[sl]"],
];
const TABS: [string, string, string?][] = [
  ["Торговля", "w-[69px]"], ["Активы", "w-[59px]"], ["История Счета", "w-24"], ["Новости", "w-[74px]", "99"], ["Алерты", "w-[59px]"],
  ["Почта", "w-[51px]"], ["Маркет", "w-[71px]", "37"], ["Библиотека", "w-20"], ["Эксперты", "w-[69px]"], ["Журнал", "w-[61px]"],
];

function Terminal() {
  return (
    <section className="flex shrink-0 border-t border-white pt-1">
      <div className="flex w-4 shrink-0 flex-col items-center pr-[2px] pb-1">
        <button type="button" aria-label="Закрыть терминал" className="flex h-[14px] items-start"><Svg w={6} h={8}><path d="M0.500 1.500l5 5M5.500 1.500l-5 5" stroke="#000" strokeWidth="1.600" /></Svg></button>
        <h2 className="flex w-[13px] flex-1 rotate-180 items-center bg-[#848284] pt-1 leading-[13px] text-[#d6d3ce] [writing-mode:vertical-rl]">Терминал</h2>
      </div>
      <div className="min-w-0 flex-1 pr-1">
        <div className="flex border-t border-[#848284]">
          <div className="min-w-0 flex-1 bg-white pb-3">
            <table className="w-full table-fixed border-collapse">
              <colgroup>{COLS.map(([, w], i) => <col key={i} className={w} />)}</colgroup>
              <thead>
                <tr className="h-[17px]">
                  {COLS.map(([c], i) => (
                    <th key={i} scope="col" className="p-0 font-normal">
                      <div className={"flex h-[17px] items-center gap-3 pt-[2px] " + RAISED + (i ? " justify-end pr-[5px]" : " pl-[4px]")}>
                        {c}
                        {!i && <Svg w={10} h={9}><path d="M5 0.500L0.500 8.500" stroke="#848284" /><path d="M5 0.500l4.500 8h-9" stroke="#fff" /></Svg>}
                      </div>
                    </th>
                  ))}
                </tr>
              </thead>
              <tbody>
                {ROWS.map((r, n) => {
                  const sel = n === 4;
                  return (
                    <tr key={r[0]} className={"h-5 " + (sel ? "bg-[#08246b] text-white" : n % 2 ? "bg-white" : "bg-[#efebef]")}>
                      {r.map((v, i) => {
                        const line = "h-5 border-b border-[#c6c3c6] p-0 leading-[19px] " + (sel ? "border-b-[#08246b] " : "");
                        if (i === 0)
                          return (
                            <td key={i} className={line + "border-r"}>
                              <div className="flex h-[19px] items-center gap-1 pl-[3px]"><DealIcon sell={r[2] === "sell"} />{v}</div>
                            </td>
                          );
                        if (i === 13) return <td key={i} className={line + "pr-[5px] text-right"}>{v}</td>;
                        if (i === 6 && n > 4)
                          return (
                            <td key={i} className={line + "border-r pr-[1px] pl-[1px] text-right"}>
                              <div className="h-[18px] bg-[#ffa2a5] pr-[2px] leading-[18px] text-[#4a1014]">{v}</div>
                            </td>
                          );
                        return <td key={i} className={line + "border-r pr-[3px] text-right"}>{v}</td>;
                      })}
                    </tr>
                  );
                })}
              </tbody>
              <tfoot>
                <tr className="h-5 bg-[#cecbce] font-bold">
                  <td colSpan={12} className="p-0">
                    <div className="flex items-center gap-[7px] pl-[7px] whitespace-pre"><Svg w={7} h={7}><circle cx="3.500" cy="3.500" r="2.800" fill="#dedbde" stroke="#848284" /></Svg>{"Прибыль: -980.48  Кредит: 0.00  Депозит: 1 044.82  Снятие: 0.00"}</div>
                  </td>
                  <td className="p-0 pr-1 text-right">64.34</td>
                  <td className="p-0" />
                </tr>
              </tfoot>
            </table>
          </div>
          <div className="flex w-4 shrink-0 flex-col bg-[#edebe8]">
            <button type="button" aria-label="Вверх" className={"flex h-4 items-center justify-center " + RAISED}><Svg w={7} h={4}><path d="M0 4h7L3.500 0z" fill="#000" /></Svg></button>
            <div className="flex-1" />
            <div className={"h-[50px] " + RAISED} />
            <button type="button" aria-label="Вниз" className={"flex h-4 items-center justify-center " + RAISED}><Caret /></button>
          </div>
        </div>
        <div className="flex h-[20px] border-t border-black text-[#5a5a5a]">
          {TABS.map(([t, w, n], i) =>
            i === 2 ? (
              <button type="button" key={t} className={"-mt-px h-[19px] border border-t-0 border-black bg-white text-black " + w}>{t}</button>
            ) : (
              <button type="button" key={t} className={"mt-[3px] flex h-3 items-center justify-center gap-[2px] leading-3 " + (i === 1 ? "" : "border-r border-[#5a5a5a] ") + w}>
                {t}
                {n && <sub className="bottom-0 pt-[5px] text-[9px] leading-none font-bold text-[#e01010] italic">{n}</sub>}
              </button>
            )
          )}
        </div>
        <div className="h-[3px] border-t border-white" />
      </div>
    </section>
  );
}

/* ---------- status and task bars ---------- */
const FIELDS = ["w-[100px]", "w-[72px]", "w-[72px]", "w-[68px]", "w-[71px]", "w-[66px]"];

function StatusBar() {
  const f = "flex h-[18px] items-center border-l border-[#848284] shadow-[inset_1px_0_0_#fff] ";
  return (
    <div className="flex h-[26px] shrink-0 items-center border-t border-b border-t-[#848284] border-b-white pt-px pl-[2px]">
      <span className="flex-1">Для вызова справки нажмите F1</span>
      <span className={f + "w-[110px] pl-1"}>Default</span>
      {FIELDS.map((w, i) => <span key={i} className={f + w} />)}
      <span className={f + "w-[121px] gap-[3px] pl-[4px]"}>
        <Svg w={24} h={13}>
          <g shapeRendering="crispEdges" strokeWidth="2">
            <path d="M1 0v13M4 0v13M7 0v13M10 0v13M13 0v13M16 0v13M19 0v13M22 0v13" stroke="#7b8a18" />
            <path d="M1 11v2M4 10v3M7 9v4M10 8v5M13 7v6M16 6v7M19 5v8M22 4v9" stroke="#10508c" />
          </g>
        </Svg>
        749/3 kb
      </span>
    </div>
  );
}

function TaskBar() {
  const grip = "h-[21px] w-[2px] border-l border-white border-r border-r-[#848284]";
  const task = "flex h-[22px] w-40 items-center gap-1 pl-1 whitespace-nowrap ";
  return (
    <footer className="flex h-7 shrink-0 items-center pr-1 pb-[2px] pl-[2px]">
      <button type="button" className={"flex h-[22px] w-[52px] items-center gap-[1px] pl-[1px] font-bold " + RAISED}>
        <Svg w={16} h={14}>
          <path d="M2 2c2-1.500 3.500-1 5 0L6 6.500C4.500 5.500 3 5.500 1 6.500z" fill="#e84a1c" /><path d="M8 2.500c2 1 3.500 1 5.500 0L12.500 7C10.500 8 9 7.500 7 6.800z" fill="#5fb52a" />
          <path d="M1 7.500c2-1.200 3.500-1 5 0L5 12c-1.500-1-3-1-5 0z" fill="#2f6fe0" /><path d="M7 8c2 1 3.500 1 5.500 0L11.500 12.500C9.500 13.500 8 13.300 6 12.300z" fill="#f8c820" />
        </Svg>
        Пуск
      </button>
      <div className={"ml-[6px] " + grip} />
      <button type="button" aria-label="Рабочий стол" className="ml-[7px]"><Svg w={17} h={17}><path d="M2 2l11-1 1 13-11 2z" fill="#b8dcf8" stroke="#3a7cc0" /><path d="M5 9l7-7 2 2-7 7-3 1z" fill="#fff" stroke="#2b65a8" /><path d="M5 13h6" stroke="#3a7cc0" /></Svg></button>
      <button type="button" aria-label="Internet Explorer" className="ml-2"><Svg w={17} h={17}><path d="M13.500 11.500a5.500 5.500 0 1 1 .5-3H5" stroke="#2f8fe0" strokeWidth="2.800" /><path d="M1 14.500C0 11 8 2 15 1.500c1 0 1 1.500 0 3" stroke="#f0b820" strokeWidth="1.300" /></Svg></button>
      <div className={"mr-1 ml-[32px] " + grip} />
      <div className="flex flex-1 gap-[3px]">
        <button type="button" className={task + "border border-t-[#404040] border-r-white border-b-white border-l-[#404040] bg-[#f4f3f1] font-bold shadow-[inset_1px_1px_0_#848284]"}><AppIcon />3298038: EGlobal-Pro...</button>
        <button type="button" className={task + RAISED}><FolderIcon />C:\Documents and Settin...</button>
        <button type="button" className={task + RAISED}><FolderIcon />C:\Install\Generic A-TLP ...</button>
      </div>
      <div className={grip} />
      <span className="mr-1 ml-2 flex h-4 w-4 items-center justify-center bg-[#08246b] text-white">EN</span>
      <div className={grip} />
      <div className="ml-[5px] flex h-6 w-[79px] items-center border border-t-[#848284] border-r-white border-b-white border-l-[#848284] pl-[3px]">
        <Svg w={14} h={14}><path d="M1 1h4l1 3 3-1 1 4-5 3z" fill="#3fbf3f" stroke="#1a7a1a" /><path d="M6 10l6-3 2 3-6 4z" fill="#c8c0d8" stroke="#666" /></Svg>
        <span className="ml-[3px] flex h-[14px] w-[14px] items-center justify-center rounded-[2px] bg-[#6b6b6b] text-[8px] leading-none font-bold text-white">vm</span>
        <time className="flex-1 pr-[8px] text-right">5:25</time>
      </div>
    </footer>
  );
}

export default function App() {
  return (
    <div className="flex h-screen min-h-[700px] w-full flex-col overflow-hidden bg-[#d6d3ce] text-[11px] leading-[13px] text-black font-['DejaVu_Sans_Condensed','DejaVu_Sans',sans-serif]">
      <Header />
      <main className="flex min-h-0 flex-1">
        <Navigator />
        <ChartArea />
      </main>
      <Terminal />
      <StatusBar />
      <TaskBar />
    </div>
  );
}
